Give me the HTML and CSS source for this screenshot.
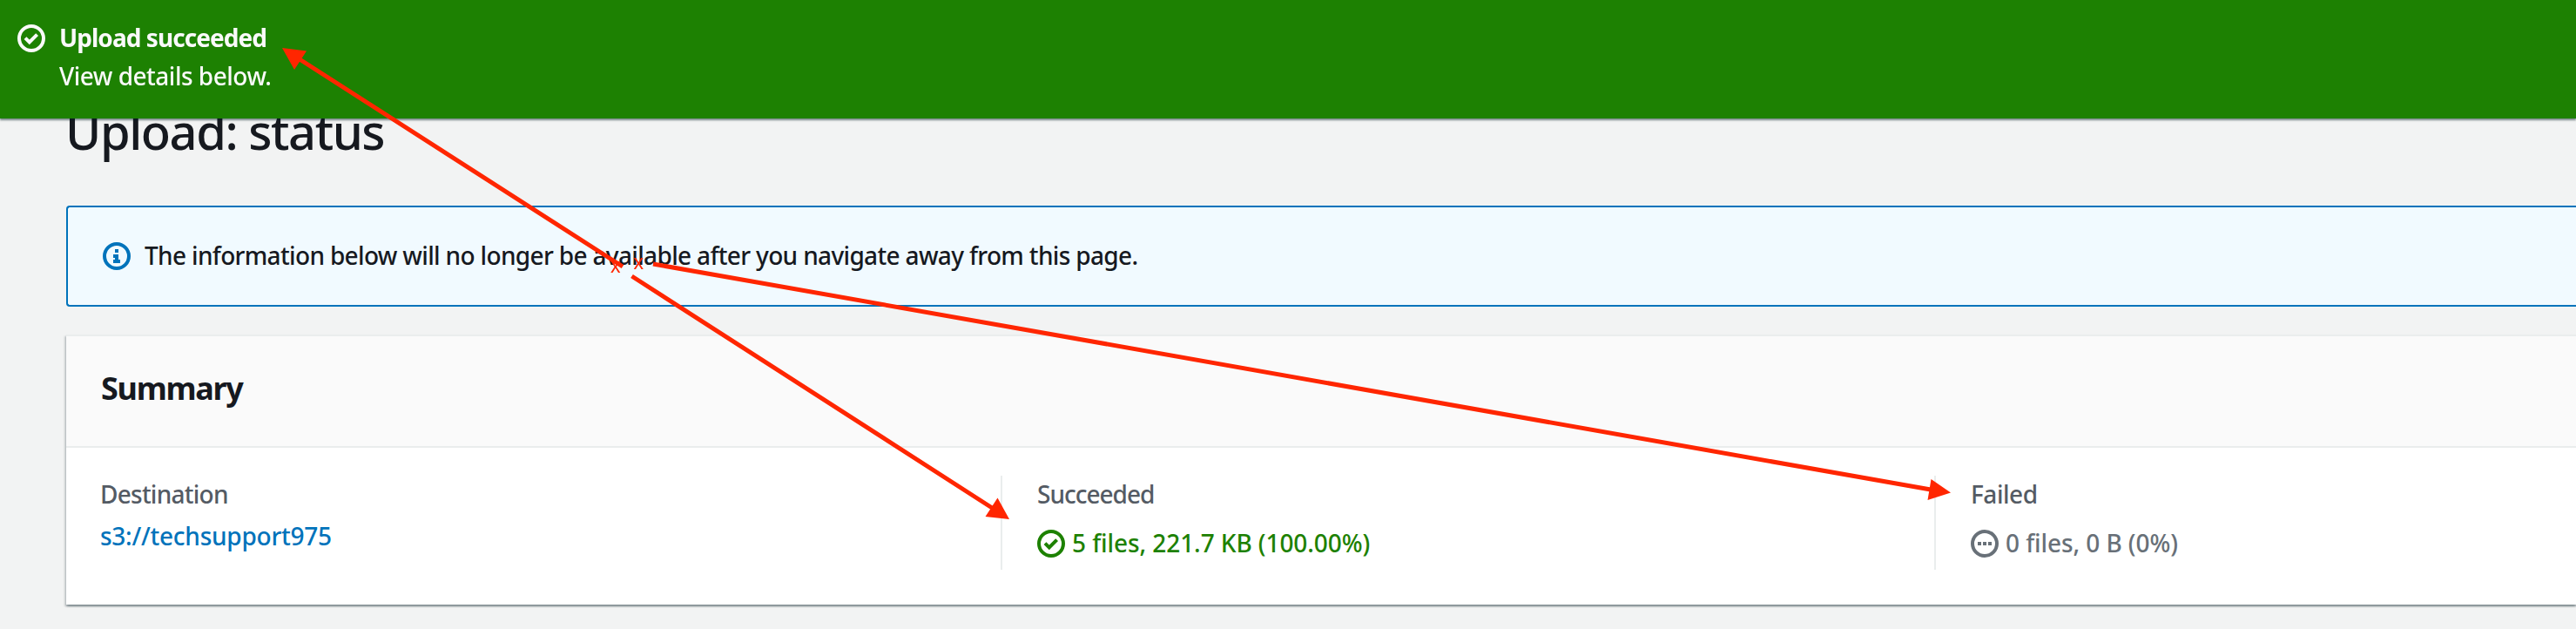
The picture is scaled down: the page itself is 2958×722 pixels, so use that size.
FILE: index.html
```html
<!DOCTYPE html>
<html lang="en">
<head>
<meta charset="utf-8">
<title>Upload: status</title>
<link rel="stylesheet" href="styles.css">
</head>
<body>
<header class="flash">
  <svg class="icon flash-icon" viewBox="0 0 16 16"><circle cx="8" cy="8" r="7"/><path d="M4.5 7.8l2.4 2.4 4.4-4.4"/></svg>
  <div>
    <div class="flash-title">Upload succeeded</div>
    <div class="flash-text">View details below.</div>
  </div>
</header>
<main class="page">
  <h1 class="heading">Upload: status</h1>
  <section class="alert">
    <svg class="icon" viewBox="0 0 16 16"><circle cx="8" cy="8" r="7"/><path class="solid" d="M7 4h2v2H7zM6 7h3v3h1v2H6v-2h1V9H6z"/></svg>
    <p class="alert-text">The information below will no longer be available after you navigate away from this page.</p>
  </section>
  <section class="card">
    <div class="card-header"><h2 class="card-title">Summary</h2></div>
    <div class="card-body">
      <div class="column">
        <div class="label destination">Destination</div>
        <a class="link">s3://techsupport975</a>
      </div>
      <div class="column">
        <div class="label succeeded">Succeeded</div>
        <div class="value success">
          <svg class="icon" viewBox="0 0 16 16"><circle cx="8" cy="8" r="7"/><path d="M4.5 7.8l2.4 2.4 4.4-4.4"/></svg>
          <span>5 files, 221.7 KB (100.00%)</span>
        </div>
      </div>
      <div class="column">
        <div class="label failed">Failed</div>
        <div class="value muted">
          <svg class="icon" viewBox="0 0 16 16"><circle cx="8" cy="8" r="7"/><path class="solid" d="M4 7h2v2H4zM7 7h2v2H7zM10 7h2v2h-2z"/></svg>
          <span>0 files, 0 B (0%)</span>
        </div>
      </div>
    </div>
  </section>
</main>
<svg class="annotations" viewBox="0 0 2958 722">
  <path class="shaft" d="M344 68L715 306M725.5 317L1140 583.500M750 303L2217 562"/>
  <path class="head" d="M324 55l28 3.500-14 21.500zM1159 596l-27.500-3 14-21.500zM2240 565.500l-26.500 8.500 4-24z"/>
  <text class="mark" x="701" y="313">x</text>
  <text class="mark" x="727.500" y="309">x</text>
</svg>
</body>
</html>
```
FILE: styles.css
```css
* { box-sizing: border-box; }

body {
  margin: 0;
  height: 722px;
  overflow: hidden;
  background: #f2f3f3;
  color: #16191f;
  font: 500 28px/44px "Noto Sans", "Open Sans", sans-serif;
}

h1, h2, p { margin: 0; }

.icon {
  flex: none;
  width: 32px;
  height: 32px;
  fill: none;
  stroke: currentColor;
  stroke-width: 2;
}
.icon .solid { fill: currentColor; stroke: none; }

.flash {
  position: fixed;
  inset: 0 0 auto;
  display: flex;
  gap: 16px;
  height: 136px;
  padding: 21px 20px 0;
  background: #1d8102;
  color: #fafafa;
  box-shadow: 0 2px 2px rgba(0, 28, 36, .5);
}
.flash-icon { margin-top: 7px; }
.flash-title { font-weight: 700; letter-spacing: -.95px; }
.flash-text { letter-spacing: -.5px; }

.page { padding: 114px 0 0 76px; }

.heading {
  margin-left: -1px;
  font-size: 56px;
  line-height: 72px;
  font-weight: 500;
  letter-spacing: -1.45px;
}

.alert {
  display: flex;
  gap: 16px;
  height: 116px;
  margin-top: 50px;
  padding: 40px;
  border: 2px solid #0073bb;
  border-right: 0;
  border-radius: 4px 0 0 4px;
  background: #f1faff;
  color: #0073bb;
}
.alert-text {
  margin-top: -7px;
  color: #16191f;
  letter-spacing: -.66px;
  white-space: nowrap;
}

.card {
  height: 310px;
  margin-top: 32px;
  border-top: 2px solid #eaeded;
  background: #fff;
  box-shadow: 0 2px 2px rgba(0, 28, 36, .3), -2px 2px 2px rgba(0, 28, 36, .15), 2px 2px 2px rgba(0, 28, 36, .15);
}
.card-header {
  height: 128px;
  padding: 38px 40px 0;
  border-bottom: 2px solid #eaeded;
  background: #fafafa;
}
.card-title { font-size: 36px; font-weight: 700; letter-spacing: -1.3px; }

.card-body {
  display: grid;
  grid-template-columns: 1073px 1072px 1fr;
  padding-top: 32px;
}
.column { height: 108px; padding-left: 40px; }
.column + .column { border-left: 2px solid #eaeded; }

.label { margin-top: -1px; color: #545b64; }
.destination { margin-left: -1px; letter-spacing: -.75px; }
.succeeded { letter-spacing: -1px; }
.failed { letter-spacing: -.45px; }

.link { display: block; margin: 4px 0 0 -1px; color: #0073bb; letter-spacing: -.25px; }

.value {
  display: flex;
  gap: 8px;
  margin-top: 12px;
  letter-spacing: -.08px;
}
.value .icon { margin-top: 7px; }
.success { color: #1d8102; }
.muted { color: #687078; }

.annotations {
  position: fixed;
  top: 0;
  left: 0;
  width: 2958px;
  height: 722px;
}
.shaft { fill: none; stroke: #ff2600; stroke-width: 5; }
.head { fill: #ff2600; }
.mark { fill: #ff2600; font: 23px "Liberation Sans", Arial, sans-serif; }
```
